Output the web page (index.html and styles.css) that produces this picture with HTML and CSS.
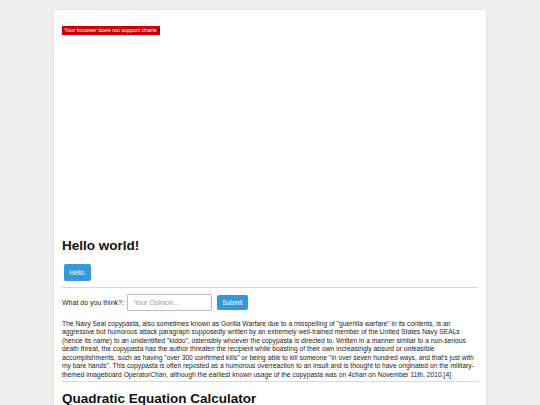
FILE: index.html
```html
<!DOCTYPE html>
<html>
<head>
<meta charset="utf-8">
<link rel="stylesheet" href="styles.css">
</head>
<body>
<div class="card">
  <div class="chart">
    <span class="chart-error">Your browser does not support charts <span class="close">×</span></span>
  </div>
  <h1 class="title">Hello world!</h1>
  <button class="btn btn-hello">Hello.</button>
  <hr class="rule">
  <div class="form-row">
    <label class="label">What do you think?:</label>
    <input class="input" type="text" placeholder="Your Opinion...">
    <button class="btn btn-submit">Submit</button>
  </div>
  <p class="text">The Navy Seal copypasta, also sometimes known as Gorilla Warfare due to a misspelling of "guerrilla warfare" in its contents, is an aggressive but humorous attack paragraph supposedly written by an extremely well-trained member of the United States Navy SEALs (hence its name) to an unidentified "kiddo", ostensibly whoever the copypasta is directed to. Written in a manner similar to a non-serious death threat, the copypasta has the author threaten the recipient while boasting of their own increasingly absurd or unfeasible accomplishments, such as having "over 300 confirmed kills" or being able to kill someone "in over seven hundred ways, and that's just with my bare hands". This copypasta is often reposted as a humorous overreaction to an insult and is thought to have originated on the military-themed imageboard OperatorChan, although the earliest known usage of the copypasta was on 4chan on November 11th, 2010.[4]</p>
  <hr class="rule rule-2">
  <h2 class="title title-2">Quadratic Equation Calculator</h2>
</div>
</body>
</html>
```
FILE: styles.css
```css
html, body {
  margin: 0;
  padding: 0;
  background: #eeeeee;
  font-family: "Liberation Sans", Arial, sans-serif;
  color: #222;
}
.card {
  width: 416px;
  margin: 10px auto 0;
  padding: 8px;
  background: #fff;
  border-radius: 3px;
  box-shadow: 0 0 2px rgba(0,0,0,0.12);
  min-height: 420px;
}
.chart {
  height: 220px;
}
.chart-error {
  display: inline-flex;
  align-items: center;
  height: 9px;
  padding: 0 2px;
  background: #cc0000;
  color: #fff;
  font-size: 5.6px;
  line-height: 9px;
  white-space: nowrap;
  width: 94px;
}
.close {
  margin-left: auto;
  color: #400;
  font-size: 6px;
  font-weight: bold;
}
.title {
  margin: 0;
  font-size: 13.5px;
  font-weight: bold;
  color: #111;
  line-height: 15.5px;
}
.btn {
  border: none;
  background: #3498db;
  color: #fff;
  font-family: inherit;
  font-size: 6.5px;
  border-radius: 2px;
  padding: 0;
  cursor: pointer;
}
.btn-hello {
  display: block;
  margin: 10px 0 0 2px;
  width: 27px;
  height: 17px;
}
.rule {
  border: none;
  border-top: 1px solid #d8d8d8;
  margin: 6px 0 0;
  height: 0;
}
.form-row {
  display: flex;
  align-items: center;
  margin-top: 6px;
  height: 17px;
}
.label {
  font-size: 7px;
  color: #222;
}
.input {
  box-sizing: border-box;
  margin-left: 3px;
  width: 85px;
  height: 17px;
  border: 1px solid #bbb;
  border-radius: 1px;
  padding: 0 6px;
  font-family: inherit;
  font-size: 6.8px;
  color: #333;
  outline: none;
}
.input::placeholder {
  color: #999;
}
.btn-submit {
  margin-left: 5px;
  width: 31px;
  height: 15px;
}
.text {
  margin: 9px 0 0;
  font-size: 6.72px;
  line-height: 8.5px;
  color: #222;
}
.rule-2 {
  margin-top: 2px;
}
.title-2 {
  margin-top: 9px;
}
```
